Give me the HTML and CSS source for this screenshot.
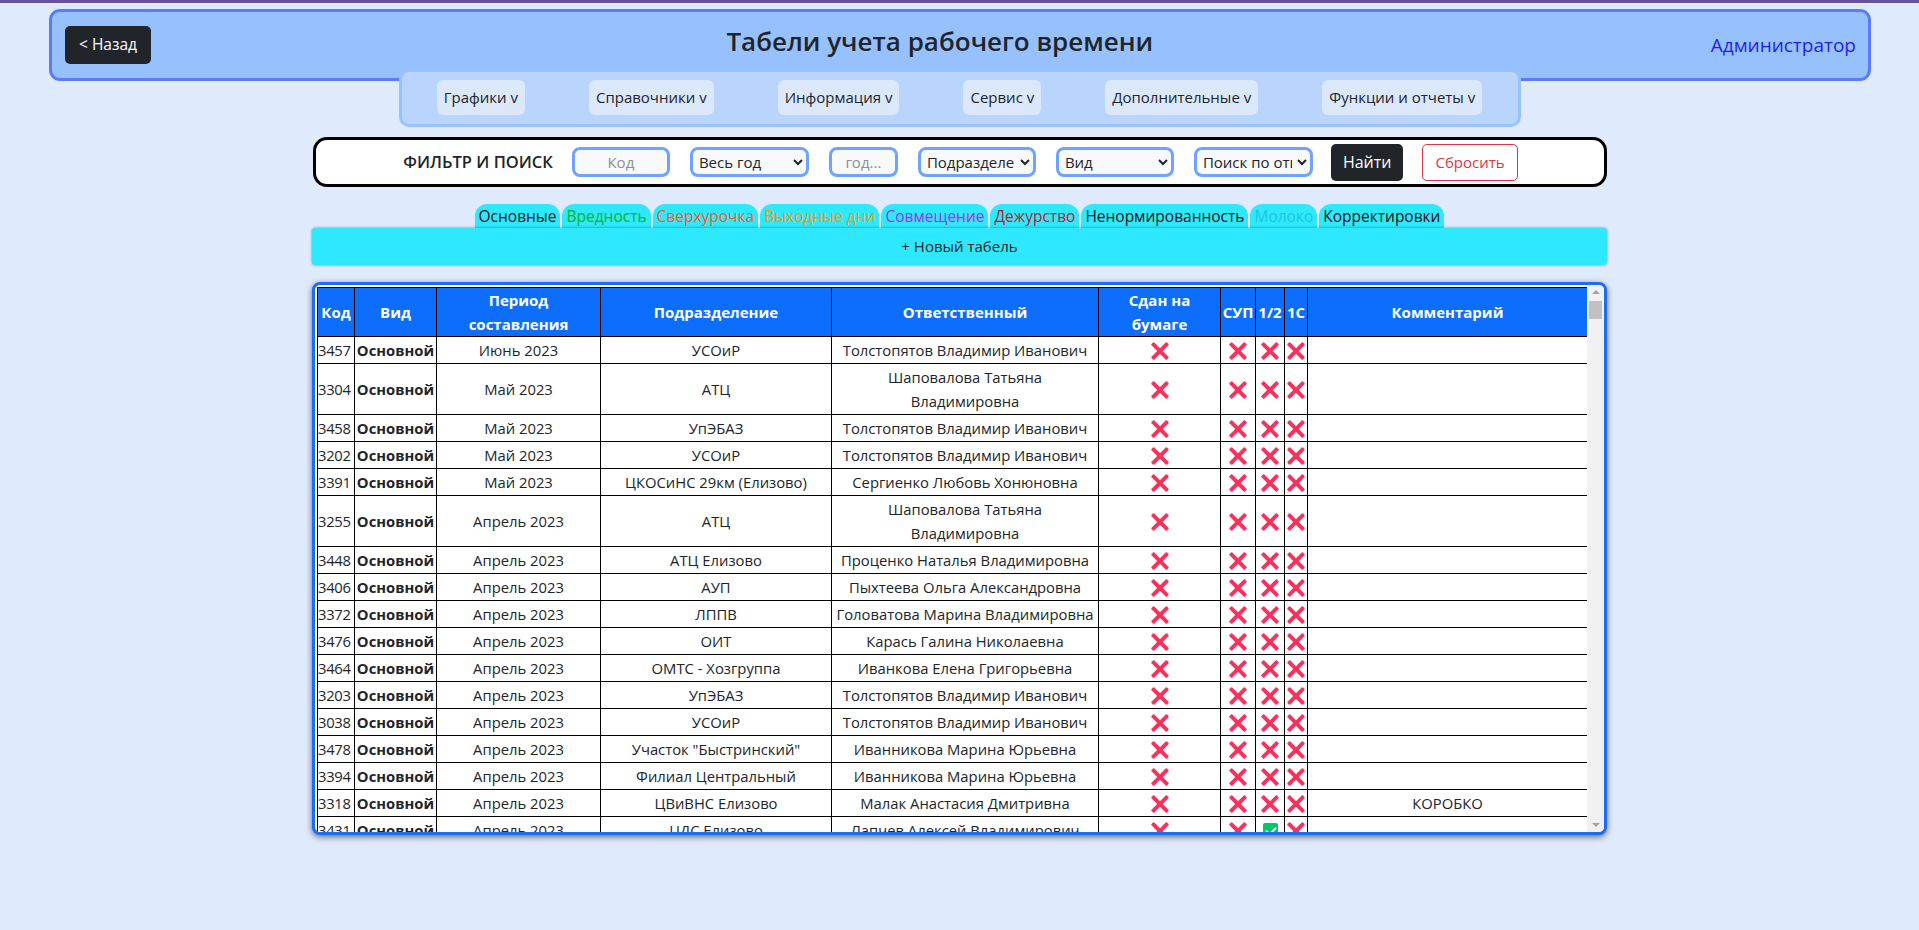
FILE: index.html
```html
<!DOCTYPE html>
<html lang="ru">
<head>
<meta charset="utf-8">
<title>Табели учета рабочего времени</title>
<link rel="stylesheet" href="styles.css">
</head>
<body>
<div class="topbar"></div>
<header class="header">
  <button class="btn-back">&lt; Назад</button>
  <h1 class="title">Табели учета рабочего времени</h1>
  <a class="user">Администратор</a>
</header>
<nav class="menu">
  <span class="menu-item">Графики v</span>
  <span class="menu-item">Справочники v</span>
  <span class="menu-item">Информация v</span>
  <span class="menu-item">Сервис v</span>
  <span class="menu-item">Дополнительные v</span>
  <span class="menu-item">Функции и отчеты v</span>
</nav>
<form class="filter">
  <span class="filter-label">ФИЛЬТР И ПОИСК</span>
  <input class="field f-code" placeholder="Код">
  <select class="field f-year"><option>Весь год</option></select>
  <input class="field f-yr" placeholder="год...">
  <select class="field f-dep"><option>Подразделение</option></select>
  <select class="field f-kind"><option>Вид</option></select>
  <select class="field f-resp"><option>Поиск по ответственному</option></select>
  <button type="button" class="btn-find">Найти</button>
  <button type="button" class="btn-reset">Сбросить</button>
</form>
<div class="tabs">
  <span class="tab c-main">Основные</span>
  <span class="tab c-harm">Вредность</span>
  <span class="tab c-over">Сверхурочка</span>
  <span class="tab c-week">Выходные дни</span>
  <span class="tab c-comb">Совмещение</span>
  <span class="tab c-duty">Дежурство</span>
  <span class="tab c-main">Ненормированность</span>
  <span class="tab c-milk">Молоко</span>
  <span class="tab c-main">Корректировки</span>
</div>
<div class="newbar">+ Новый табель</div>
<div class="table-wrap">
<div class="table-scroll">
<table class="grid">
  <colgroup>
    <col class="w-code"><col class="w-kind"><col class="w-period"><col class="w-dep"><col class="w-resp"><col class="w-paper"><col class="w-sup"><col class="w-half"><col class="w-1c"><col>
  </colgroup>
  <thead>
    <tr><th>Код</th><th>Вид</th><th>Период составления</th><th>Подразделение</th><th>Ответственный</th><th class="th-wrap">Сдан на бумаге</th><th>СУП</th><th>1/2</th><th>1С</th><th>Комментарий</th></tr>
  </thead>
  <tbody>
    <tr><td>3457</td><td class="b">Основной</td><td>Июнь 2023</td><td>УСОиР</td><td>Толстопятов Владимир Иванович</td><td><i class="x"></i></td><td><i class="x"></i></td><td><i class="x"></i></td><td><i class="x"></i></td><td></td></tr>
    <tr><td>3304</td><td class="b">Основной</td><td>Май 2023</td><td>АТЦ</td><td>Шаповалова Татьяна Владимировна</td><td><i class="x"></i></td><td><i class="x"></i></td><td><i class="x"></i></td><td><i class="x"></i></td><td></td></tr>
    <tr><td>3458</td><td class="b">Основной</td><td>Май 2023</td><td>УпЭБАЗ</td><td>Толстопятов Владимир Иванович</td><td><i class="x"></i></td><td><i class="x"></i></td><td><i class="x"></i></td><td><i class="x"></i></td><td></td></tr>
    <tr><td>3202</td><td class="b">Основной</td><td>Май 2023</td><td>УСОиР</td><td>Толстопятов Владимир Иванович</td><td><i class="x"></i></td><td><i class="x"></i></td><td><i class="x"></i></td><td><i class="x"></i></td><td></td></tr>
    <tr><td>3391</td><td class="b">Основной</td><td>Май 2023</td><td>ЦКОСиНС 29км (Елизово)</td><td>Сергиенко Любовь Хонюновна</td><td><i class="x"></i></td><td><i class="x"></i></td><td><i class="x"></i></td><td><i class="x"></i></td><td></td></tr>
    <tr><td>3255</td><td class="b">Основной</td><td>Апрель 2023</td><td>АТЦ</td><td>Шаповалова Татьяна Владимировна</td><td><i class="x"></i></td><td><i class="x"></i></td><td><i class="x"></i></td><td><i class="x"></i></td><td></td></tr>
    <tr><td>3448</td><td class="b">Основной</td><td>Апрель 2023</td><td>АТЦ Елизово</td><td>Проценко Наталья Владимировна</td><td><i class="x"></i></td><td><i class="x"></i></td><td><i class="x"></i></td><td><i class="x"></i></td><td></td></tr>
    <tr><td>3406</td><td class="b">Основной</td><td>Апрель 2023</td><td>АУП</td><td>Пыхтеева Ольга Александровна</td><td><i class="x"></i></td><td><i class="x"></i></td><td><i class="x"></i></td><td><i class="x"></i></td><td></td></tr>
    <tr><td>3372</td><td class="b">Основной</td><td>Апрель 2023</td><td>ЛППВ</td><td>Головатова Марина Владимировна</td><td><i class="x"></i></td><td><i class="x"></i></td><td><i class="x"></i></td><td><i class="x"></i></td><td></td></tr>
    <tr><td>3476</td><td class="b">Основной</td><td>Апрель 2023</td><td>ОИТ</td><td>Карась Галина Николаевна</td><td><i class="x"></i></td><td><i class="x"></i></td><td><i class="x"></i></td><td><i class="x"></i></td><td></td></tr>
    <tr><td>3464</td><td class="b">Основной</td><td>Апрель 2023</td><td>ОМТС - Хозгруппа</td><td>Иванкова Елена Григорьевна</td><td><i class="x"></i></td><td><i class="x"></i></td><td><i class="x"></i></td><td><i class="x"></i></td><td></td></tr>
    <tr><td>3203</td><td class="b">Основной</td><td>Апрель 2023</td><td>УпЭБАЗ</td><td>Толстопятов Владимир Иванович</td><td><i class="x"></i></td><td><i class="x"></i></td><td><i class="x"></i></td><td><i class="x"></i></td><td></td></tr>
    <tr><td>3038</td><td class="b">Основной</td><td>Апрель 2023</td><td>УСОиР</td><td>Толстопятов Владимир Иванович</td><td><i class="x"></i></td><td><i class="x"></i></td><td><i class="x"></i></td><td><i class="x"></i></td><td></td></tr>
    <tr><td>3478</td><td class="b">Основной</td><td>Апрель 2023</td><td>Участок "Быстринский"</td><td>Иванникова Марина Юрьевна</td><td><i class="x"></i></td><td><i class="x"></i></td><td><i class="x"></i></td><td><i class="x"></i></td><td></td></tr>
    <tr><td>3394</td><td class="b">Основной</td><td>Апрель 2023</td><td>Филиал Центральный</td><td>Иванникова Марина Юрьевна</td><td><i class="x"></i></td><td><i class="x"></i></td><td><i class="x"></i></td><td><i class="x"></i></td><td></td></tr>
    <tr><td>3318</td><td class="b">Основной</td><td>Апрель 2023</td><td>ЦВиВНС Елизово</td><td>Малак Анастасия Дмитривна</td><td><i class="x"></i></td><td><i class="x"></i></td><td><i class="x"></i></td><td><i class="x"></i></td><td>КОРОБКО</td></tr>
    <tr><td>3431</td><td class="b">Основной</td><td>Апрель 2023</td><td>ЦДС Елизово</td><td>Лапчев Алексей Владимирович</td><td><i class="x"></i></td><td><i class="x"></i></td><td><i class="ok"></i></td><td><i class="x"></i></td><td></td></tr>
    <tr><td>3340</td><td class="b">Основной</td><td>Апрель 2023</td><td>ЦКОСиНС 29км (Елизово)</td><td>Сергиенко Любовь Хонюновна</td><td><i class="x"></i></td><td><i class="x"></i></td><td><i class="x"></i></td><td><i class="x"></i></td><td></td></tr>
    <tr><td>3299</td><td class="b">Основной</td><td>Март 2023</td><td>АТЦ</td><td>Шаповалова Татьяна Владимировна</td><td><i class="x"></i></td><td><i class="x"></i></td><td><i class="x"></i></td><td><i class="x"></i></td><td></td></tr>
  </tbody>
</table>
</div>
<div class="vscroll">
  <div class="vs-btn"><span class="tri-up"></span></div>
  <div class="vs-track"><div class="vs-thumb"></div></div>
  <div class="vs-btn"><span class="tri-down"></span></div>
</div>
</div>
</body>
</html>
```

FILE: styles.css
```css
* { box-sizing: border-box; }
html, body { margin: 0; padding: 0; }
body {
  background: #dfeafd;
  font-family: "Open Sans", "Noto Sans", sans-serif;
  font-size: 16px;
  line-height: 1.5;
  color: #212529;
  min-height: 930px;
}
.topbar {
  height: 4px;
  background: #67519a;
  border-bottom: 1px solid #eef0fb;
}
.header {
  width: 1822px;
  margin: 5px 48px 0 49px;
  height: 72px;
  background: #97c1fe;
  border: 3px solid #5a7cf8;
  border-radius: 11px;
  display: flex;
  justify-content: space-between;
  align-items: center;
  padding: 0 12px 0 13px;
}
.btn-back {
  background: #212529;
  color: #fff;
  border: 0;
  border-radius: 5px;
  font: inherit;
  font-size: 15.5px;
  height: 38px;
  padding: 0 14px;
}
.title {
  margin: 0 0 6px 18px;
  font-size: 26px;
  font-weight: 600;
  line-height: 1.2;
  color: #212529;
}
.user { color: #1f1ff5; font-size: 19px; }
.menu {
  width: 1122px;
  margin: -12px auto 0;
  position: relative;
  height: 58px;
  background: #b9d5fe;
  border: 3px solid #98c2fd;
  border-radius: 10px;
  display: flex;
  align-items: center;
  justify-content: center;
  gap: 64px;
  padding-bottom: 2px;
}
.menu-item {
  background: #dbe8fc;
  border-radius: 6px;
  padding: 0 7px;
  height: 35px;
  line-height: 35px;
  font-size: 15px;
  color: #212529;
}
.filter {
  width: 1294px;
  margin: 10px auto 0;
  height: 50px;
  background: #fff;
  border: 3px solid #000;
  border-radius: 14px;
  display: flex;
  align-items: center;
  justify-content: center;
  gap: 20px;
  padding-left: 2px;
}
.filter-label { font-weight: 600; font-size: 16.5px; margin-right: -1px; }
.field {
  height: 30px;
  border: 3px solid #6fa3ff;
  border-radius: 8px;
  background: #f8f9fa;
  font-family: inherit;
  font-size: 15px;
  color: #212529;
  padding: 0 2px;
}
input.field { text-align: center; }
input.field::placeholder { color: #8a8f94; }
.f-code { width: 98px; }
.f-year { width: 119px; }
.f-yr { width: 69px; }
.f-dep { width: 118px; }
.f-kind { width: 118px; }
.f-resp { width: 119px; }
.btn-find {
  background: #212529;
  color: #fff;
  border: 0;
  border-radius: 5px;
  height: 37px;
  padding: 0 12px;
  font: inherit;
  font-size: 16px;
  margin-left: -2px;
}
.btn-reset {
  background: #fff;
  color: #dc3545;
  border: 1px solid #dc3545;
  border-radius: 5px;
  height: 37px;
  padding: 0 12px;
  font: inherit;
  font-size: 15px;
  margin-left: -1px;
}
.tabs {
  margin-top: 17px;
  display: flex;
  justify-content: center;
  gap: 2px;
  height: 24px;
}
.tab {
  background: #2ee9fd;
  border-radius: 12px 12px 0 0;
  padding: 0 4px;
  line-height: 25px;
  font-size: 15.5px;
}
.c-main { color: #111; }
.c-harm { color: #00b51a; }
.c-over { color: #ff5722; }
.c-week { color: #f59b00; }
.c-comb { color: #a12dff; }
.c-duty { color: #c0162a; }
.c-milk { color: #1cc6e0; }
.newbar {
  width: 1295px;
  margin: 0 auto;
  height: 37px;
  background: #2ee9fd;
  border-radius: 4px;
  box-shadow: 0 0 3px rgba(0, 0, 0, 0.45);
  text-align: center;
  line-height: 36px;
  font-size: 15px;
  position: relative;
}
.table-wrap {
  width: 1295px;
  height: 553px;
  margin: 17px auto 0;
  border: 3px solid #1a6ef5;
  border-radius: 8px;
  box-shadow: 0 2px 6px rgba(0, 0, 0, 0.55);
  background: #fff;
  display: flex;
  overflow: hidden;
}
.table-scroll {
  flex: 1;
  overflow: hidden;
  padding: 2px 0 0 2px;
}
.vscroll {
  width: 17px;
  flex: none;
  background: #f1f1f1;
  display: flex;
  flex-direction: column;
}
.vs-btn {
  height: 14px;
  display: flex;
  align-items: center;
  justify-content: center;
}
.tri-up {
  width: 0; height: 0;
  border-left: 4px solid transparent;
  border-right: 4px solid transparent;
  border-bottom: 4px solid #a3a3a3;
}
.tri-down {
  width: 0; height: 0;
  border-left: 4px solid transparent;
  border-right: 4px solid transparent;
  border-top: 4px solid #a3a3a3;
}
.vs-track { flex: 1; padding: 2px 2px 0; }
.vs-thumb { height: 18px; background: #c1c1c1; }
.grid {
  width: 1271px;
  border-collapse: collapse;
  table-layout: fixed;
  font-size: 14.8px;
}
.w-code { width: 37px; }
.w-kind { width: 82px; }
.w-period { width: 164px; }
.w-dep { width: 231px; }
.w-resp { width: 267px; }
.w-paper { width: 122px; }
.w-sup { width: 35px; }
.w-half { width: 29px; }
.w-1c { width: 23px; }
.grid th, .grid td {
  border: 1px solid #000;
  padding: 1px 0;
  text-align: center;
  line-height: 24px;
  vertical-align: middle;
}
.grid th {
  background: #0d6efd;
  color: #fff;
  font-weight: 700;
  font-size: 15px;
  padding: 0;
}
.grid th.th-wrap { padding: 0 10px; }
.grid td { background: #fff; }
.grid td.b { font-weight: 700; }
.grid td:first-child { text-align: left; padding-left: 0; letter-spacing: -0.3px; }
.x {
  display: inline-block;
  width: 17px;
  height: 17px;
  position: relative;
  vertical-align: middle;
  margin-top: -3px;
}
.x::before, .x::after {
  content: "";
  position: absolute;
  left: -2.5px;
  top: 6.5px;
  width: 22px;
  height: 4px;
  background: #f8315d;
  border-radius: 1px;
  transform: rotate(45deg);
}
.x::after { transform: rotate(-45deg); }
.ok {
  display: inline-block;
  width: 15px;
  height: 15px;
  background: #00c96b;
  border-radius: 2px;
  position: relative;
  vertical-align: middle;
  margin-top: -3px;
}
.ok::after {
  content: "";
  position: absolute;
  left: 5px;
  top: 2px;
  width: 4px;
  height: 8px;
  border: solid #fff;
  border-width: 0 2px 2px 0;
  transform: rotate(45deg);
}
```
